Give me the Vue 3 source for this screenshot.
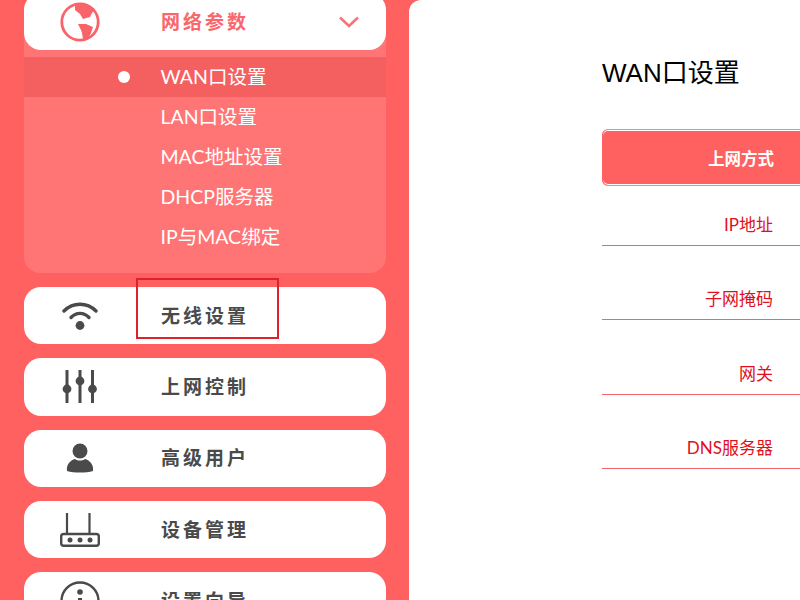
<script setup>
const subItems = [
  { label: 'WAN口设置', active: true },
  { label: 'LAN口设置' },
  { label: 'MAC地址设置' },
  { label: 'DHCP服务器' },
  { label: 'IP与MAC绑定' }
]
const rows = ['IP地址', '子网掩码', '网关', 'DNS服务器']
</script>

<template>
  <div class="page">
    <aside class="sidebar">
      <div class="group">
        <div class="card card-open">
          <span class="icon">
            <svg width="42" height="42" viewBox="0 0 42 42">
              <circle cx="21" cy="21" r="18.2" fill="#fff" stroke="#f9636a" stroke-width="2.8" />
              <path d="M16 3 L27 3 L36 8 L33 12 L31 16 L24 18 L21 13 L16 9 Z" fill="#f9636a" />
              <path d="M19 23 L27 23 L34 26 L32 32 L29 38 L24 38 L23 32 L22 29 Z" fill="#f9636a" />
            </svg>
          </span>
          <span class="label label-open">网络参数</span>
          <svg class="chevron" width="20" height="12" viewBox="0 0 20 12">
            <path d="M1 1.5 L10 10 L19 1.5" fill="none" stroke="#f9737a" stroke-width="2.6" />
          </svg>
        </div>
        <ul class="submenu">
          <li v-for="item in subItems" :key="item.label" class="sub-item" :class="{ active: item.active }">
            <span v-if="item.active" class="dot"></span>
            {{ item.label }}
          </li>
        </ul>
      </div>

      <div class="card">
        <span class="icon">
          <svg width="36" height="30" viewBox="0 0 36 30">
            <path d="M2 10 C11 1 25 1 34 10" fill="none" stroke="#4a4a4a" stroke-width="3.4" stroke-linecap="round" />
            <path d="M9 16.5 C14 11 22 11 27 16.5" fill="none" stroke="#4a4a4a" stroke-width="3.4" stroke-linecap="round" />
            <circle cx="18" cy="24.500" r="4.400" fill="#4a4a4a" />
          </svg>
        </span>
        <span class="label">无线设置</span>
      </div>

      <div class="card">
        <span class="icon">
          <svg width="36" height="34" viewBox="0 0 36 34">
            <g stroke="#4a4a4a" stroke-width="3" fill="none">
              <path d="M5 0 V33" /><path d="M18 0 V33" /><path d="M30.500 0 V33" />
            </g>
            <circle cx="5" cy="19" r="4.400" fill="#4a4a4a" />
            <circle cx="18" cy="11" r="4.400" fill="#4a4a4a" />
            <circle cx="30.500" cy="19" r="4.400" fill="#4a4a4a" />
          </svg>
        </span>
        <span class="label">上网控制</span>
      </div>

      <div class="card">
        <span class="icon">
          <svg width="28" height="30" viewBox="0 0 28 30">
            <circle cx="14" cy="8" r="7.500" fill="#4a4a4a" />
            <path d="M1 28 C0 21 5 17 9 16 C12 18 16 18 19 16 C23 17 28 21 27 28 C20 30 8 30 1 28 Z" fill="#4a4a4a" />
          </svg>
        </span>
        <span class="label">高级用户</span>
      </div>

      <div class="card">
        <span class="icon">
          <svg width="40" height="34" viewBox="0 0 40 34">
            <path d="M7 0 V21 M29.500 0 V21" stroke="#4a4a4a" stroke-width="2.200" fill="none" />
            <rect x="1.200" y="21" width="37.600" height="11.800" rx="2.500" fill="none" stroke="#4a4a4a" stroke-width="2.400" />
            <circle cx="10" cy="27" r="2.500" fill="#4a4a4a" />
            <circle cx="20" cy="27" r="2.500" fill="#4a4a4a" />
            <circle cx="30" cy="27" r="2.500" fill="#4a4a4a" />
          </svg>
        </span>
        <span class="label">设备管理</span>
      </div>

      <div class="card">
        <span class="icon">
          <svg width="40" height="40" viewBox="0 0 40 40">
            <circle cx="20" cy="20" r="18.500" fill="none" stroke="#4a4a4a" stroke-width="2.400" />
            <circle cx="20" cy="11" r="2.800" fill="#4a4a4a" />
            <path d="M20 17 V31" stroke="#4a4a4a" stroke-width="4" />
          </svg>
        </span>
        <span class="label">设置向导</span>
      </div>

      <div class="highlight"></div>
    </aside>

    <main class="content">
      <h1 class="title">WAN口设置</h1>
      <div class="table">
        <div class="head-row"><span class="cell-label">上网方式</span></div>
        <div v-for="(row, i) in rows" :key="row" class="row" :class="{ 'row-first': i === 0 }">
          <span class="cell-label">{{ row }}</span>
        </div>
      </div>
    </main>
  </div>
</template>

<style scoped>
.page {
  width: 800px;
  height: 600px;
  overflow: hidden;
  display: flex;
  background: #ff6060;
  font-family: Lato, "Noto Sans CJK SC", sans-serif;
}

.sidebar {
  position: relative;
  width: 409px;
  flex: none;
  box-sizing: border-box;
  margin-top: -7px;
  padding: 0 23px 0 24px;
  display: flex;
  flex-direction: column;
  gap: 14px;
}

.group {
  background: #ff7575;
  border-radius: 16px;
}

.card {
  flex: none;
  height: 57.300px;
  background: #fff;
  border-radius: 17px;
  display: flex;
  align-items: center;
  position: relative;
}

.card-open {
  height: 57px;
}

.icon {
  width: 112px;
  flex: none;
  display: flex;
  justify-content: center;
}

.icon svg {
  display: block;
}

.label {
  margin-left: 25px;
  font-size: 19px;
  font-weight: 700;
  letter-spacing: 3px;
  color: #4a4a4a;
  line-height: 24px;
}

.label-open {
  color: #f9666c;
}

.chevron {
  position: absolute;
  right: 27px;
  top: 23px;
}

.submenu {
  list-style: none;
  margin: 0;
  padding: 7px 0 16px;
}

.sub-item {
  position: relative;
  height: 40px;
  line-height: 40px;
  padding-left: 136.500px;
  font-size: 19.500px;
  color: #fff;
}

.sub-item.active {
  background: #f45f5f;
}

.dot {
  position: absolute;
  left: 94px;
  top: 14px;
  width: 12px;
  height: 12px;
  border-radius: 50%;
  background: #fff;
}

.highlight {
  position: absolute;
  left: 136px;
  top: 285px;
  width: 143px;
  height: 61px;
  box-sizing: border-box;
  border: 2px solid #e0202c;
}

.content {
  flex: 1;
  background: #fff;
  border-top-left-radius: 12px;
  padding: 57px 0 0 193px;
  min-width: 0;
}

.title {
  margin: 0 0 39px;
  font-family: "Liberation Sans", "Noto Sans CJK SC", sans-serif;
  font-size: 26px;
  font-weight: 400;
  line-height: 33px;
  color: #000;
}

.table {
  width: 300px;
}

.head-row {
  height: 57px;
  box-sizing: border-box;
  border: 1px solid #f08a8a;
  border-left-color: #ff6060;
  border-right: none;
  border-radius: 6px 0 0 6px;
  box-shadow: inset 0 1px 0 #fff, inset 0 -1px 0 #fff;
  background: #ff6060;
  color: #fff;
  font-size: 16.500px;
  font-weight: 700;
  display: flex;
  align-items: center;
}

.row {
  height: 74.300px;
  box-sizing: border-box;
  border-bottom: 1px solid #f3636a;
  color: #e01020;
  font-size: 17px;
  line-height: 24px;
  display: flex;
  align-items: flex-end;
  padding-bottom: 8px;
}

.row-first {
  height: 60px;
}

.cell-label {
  width: 171px;
  text-align: right;
}
</style>
